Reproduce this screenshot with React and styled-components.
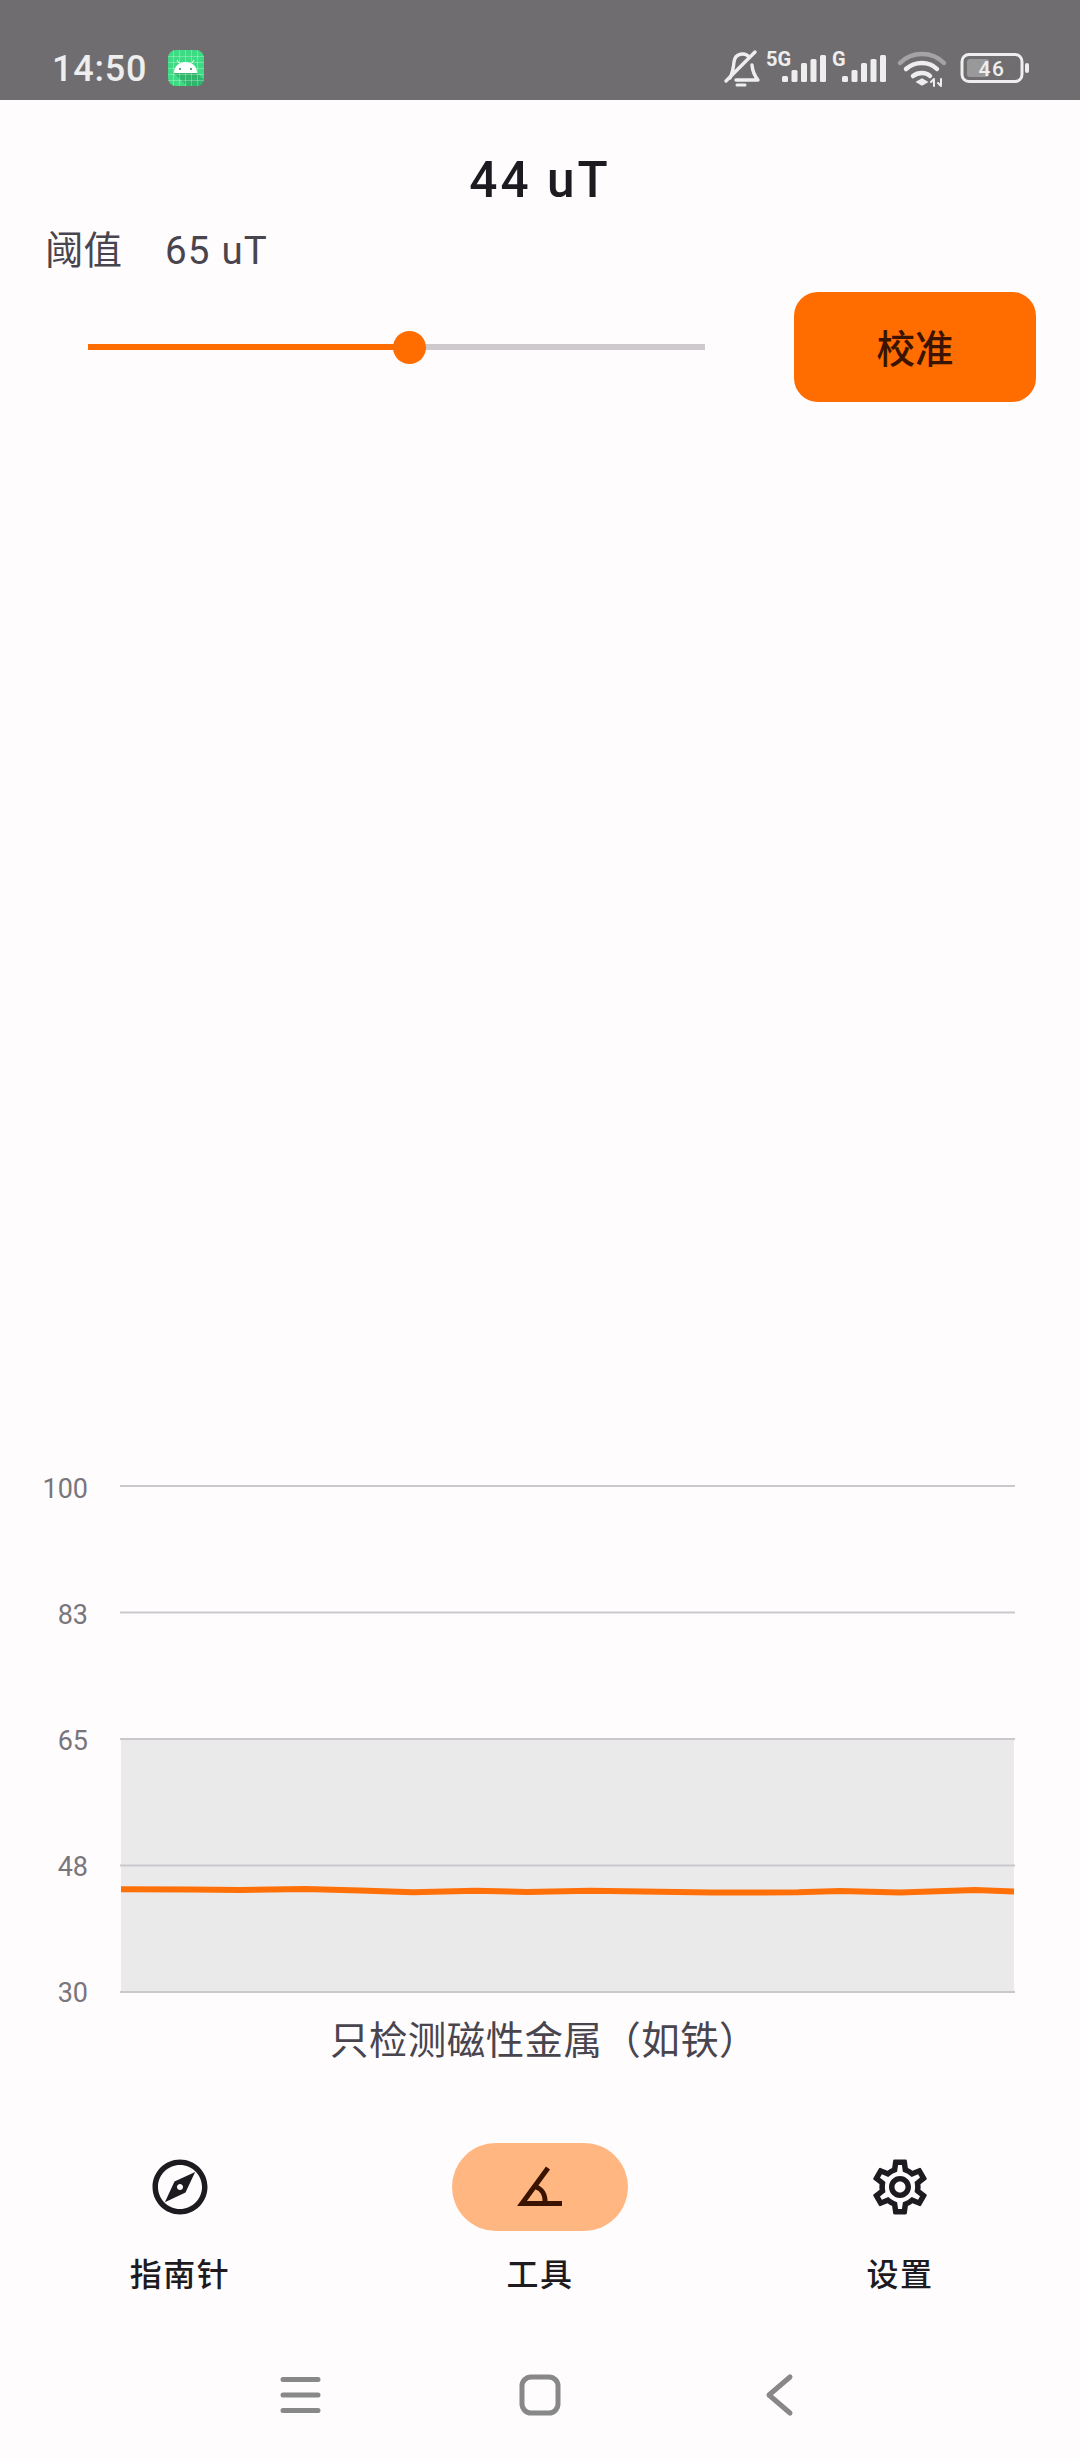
import React from 'react';
import styled, { createGlobalStyle } from 'styled-components';
import { MdOutlineExplore, MdOutlineSettings } from 'react-icons/md';

const ORANGE = '#ff6d00';
const FONT = 'Roboto, "Noto Sans CJK SC", sans-serif';

const GlobalStyle = createGlobalStyle`
    html, body {
        margin: 0;
        padding: 0;
        background: #fffcfe;
    }
`

const Page = styled.div`
    width: 1080px;
    height: 2460px;
    display: flex;
    flex-direction: column;
    background: #fffcfe;
    font-family: ${FONT};
    overflow: hidden;
`

const StatusBar = styled.div`
    height: 100px;
    box-sizing: border-box;
    flex: none;
    display: flex;
    align-items: flex-start;
    padding: 48px 49px 0 52px;
    background: #6f6d70;
`

const Clock = styled.span`
    font-size: 36px;
    font-weight: 500;
    line-height: 42px;
    letter-spacing: 0.8px;
    color: #eeeeee;
`

const AppBadge = styled.svg`
    width: 36px;
    height: 36px;
    margin: 2px 0 0 21px;
`

const StatusIcons = styled.div`
    display: flex;
    margin-left: auto;
`

const StatusIcon = styled.svg`
    height: 40px;
    width: ${p => p.$w}px;
    margin-left: ${p => p.$gap || 0}px;
    overflow: visible;
`

const Title = styled.div`
    height: 60px;
    margin-top: 50px;
    flex: none;
    text-align: center;
    font-size: 49.5px;
    font-weight: 500;
    line-height: 60px;
    letter-spacing: 3px;
    color: #1d1b20;
`

const Threshold = styled.div`
    flex: none;
    display: flex;
    gap: 43px;
    height: 50px;
    margin-top: 16px;
    padding-left: 45px;
    font-size: 38.5px;
    line-height: 50px;
    color: #49454f;
`

const ThresholdValue = styled.span`
    letter-spacing: 1.2px;
`

const SliderRow = styled.div`
    flex: none;
    display: flex;
    align-items: center;
    margin-top: 16px;
    padding: 0 44px 0 88px;
`

const Track = styled.div`
    position: relative;
    width: 617px;
    height: 6px;
    background: #cdc9cd;
`

const TrackFill = styled.div`
    height: 100%;
    background: ${ORANGE};
`

const Thumb = styled.div`
    position: absolute;
    top: -13.5px;
    width: 33px;
    height: 33px;
    margin-left: -16.5px;
    border-radius: 50%;
    background: ${ORANGE};
`

const CalibrateButton = styled.button`
    width: 242px;
    height: 110px;
    margin-left: auto;
    padding: 0 0 2px;
    border: none;
    border-radius: 24px;
    background: ${ORANGE};
    color: #3a1400;
    font-family: ${FONT};
    font-size: 38.5px;
    font-weight: 500;
`

const Spacer = styled.div`
    flex: 1;
`

const ChartRow = styled.div`
    flex: none;
    display: flex;
    align-items: center;
    height: 534px;
`

const AxisLabels = styled.div`
    width: 88px;
    height: 534px;
    display: flex;
    flex-direction: column;
    justify-content: space-between;
    align-items: flex-end;
    padding-top: 2px;
    box-sizing: border-box;
    font-size: 27px;
    line-height: 28px;
    color: #79767b;
`

const ChartSvg = styled.svg`
    width: 895px;
    height: 512px;
    margin-left: 32px;
`

const Caption = styled.div`
    flex: none;
    height: 50px;
    margin-top: 9px;
    padding-left: 8px;
    text-align: center;
    font-size: 38.5px;
    line-height: 50px;
    letter-spacing: 0.4px;
    color: #49454f;
`

const BottomNav = styled.nav`
    flex: none;
    display: grid;
    grid-template-columns: repeat(3, 360px);
    margin-top: 77px;
    height: 187px;
`

const NavItem = styled.div`
    display: flex;
    flex-direction: column;
    align-items: center;
`

const NavIcon = styled.div`
    width: 176px;
    height: 88px;
    display: flex;
    align-items: center;
    justify-content: center;
    border-radius: 44px;
    color: #1d1b20;
    background: ${p => (p.$active ? '#ffb680' : 'transparent')};
`

const NavLabel = styled.span`
    margin-top: 22px;
    font-size: 32px;
    font-weight: 500;
    line-height: 44px;
    letter-spacing: 1.5px;
    color: #1d1b20;
`

const SystemNav = styled.div`
    flex: none;
    height: 130px;
    display: flex;
    align-items: center;
    justify-content: center;
`

const SystemIcon = styled.svg`
    width: 50px;
    height: 50px;
    margin-left: ${p => p.$gap || 0}px;
    fill: none;
    stroke: #888888;
    stroke-width: 5;
    stroke-linecap: round;
    stroke-linejoin: round;
`

const levels = [100, 83, 65, 48, 30];
const gridY = [2, 128.5, 255, 381.5, 508];

// magnetic field readings in svg px
const readings = [
    [1, 405.3], [70, 405.5], [120, 406], [185, 404.9], [240, 406.5], [293, 408.3], [355, 406.8],
    [407, 408], [470, 406.8], [592, 408.6], [678, 408.3], [720, 407.1], [780, 408.6],
    [855, 406.1], [894, 407.6],
];

const navItems = [
    { label: '指南针', icon: <MdOutlineExplore size={66} /> },
    { label: '工具', active: true, icon: <AngleIcon /> },
    { label: '设置', icon: <MdOutlineSettings size={66} /> },
];

function AngleIcon() {
    return (
        <svg width="66" height="66" viewBox="0 0 66 66" fill="none" stroke="#3a1400" strokeWidth="5">
            <path d="M41 14 L15 49.5 H55" />
            <path d="M29 33 C35 35 38.5 41 38 49" />
        </svg>
    );
}

const AndroidBadge = () => (
    <AppBadge viewBox="0 0 36 36">
        <rect width="36" height="36" rx="8" fill="#3ddc84" />
        <path d="M6 23 H29 L36 30 V28 C36 33 33 36 28 36 H19 Z" fill="#2fb56c" />
        <path
            d="M0 6.5H36M0 12.5H36M0 18.5H36M0 24.5H36M0 30.5H36M5.5 0V36M11.5 0V36M17.5 0V36M23.5 0V36M29.5 0V36"
            stroke="#ffffff"
            strokeOpacity="0.35"
            strokeWidth="0.8"
        />
        <path d="M6 23 C6 16 11 12 17.5 12 C24 12 29 16 29 23 Z" fill="#ffffff" />
        <path d="M11 13 L9 10 M24 13 L26 10" stroke="#ffffff" strokeWidth="1" />
        <circle cx="12" cy="19" r="1" fill="#1f8a52" />
        <circle cx="23" cy="19" r="1" fill="#1f8a52" />
    </AppBadge>
);

const BellOffIcon = () => (
    <StatusIcon $w={36} viewBox="0 0 36 40" fill="none" stroke="#eeeeee" strokeWidth="3.4" strokeLinecap="round" strokeLinejoin="round">
        <path d="M2 33 L31 4" />
        <path d="M25 9 C21 4 11 5 10 14 C9.5 19 9 24 6 30" />
        <path d="M28 17 C28.5 23 30 27 34 32 H12" />
        <path d="M13 37 H21" strokeWidth="3" />
    </StatusIcon>
);

const barHeights = [6, 12, 19, 23, 27];

const SignalIcon = ({ label, w, barsX, gap }) => (
    <StatusIcon $w={w} $gap={gap} viewBox={`0 0 ${w} 40`}>
        <text x="0" y="18" fontFamily="Roboto, sans-serif" fontSize="20" fontWeight="700" fill="#eeeeee">{label}</text>
        {barHeights.map((h, i) => (
            <rect key={i} x={barsX + i * 9.5} y={34 - h} width="6" height={h} rx="1.5" fill="#eeeeee" />
        ))}
    </StatusIcon>
);

const WifiIcon = () => (
    <StatusIcon $w={48} $gap={11} viewBox="0 0 48 40" fill="none" strokeLinecap="round">
        <path d="M2 15 C14 3 34 3 46 15" stroke="#a5a3a5" strokeWidth="4.5" />
        <path d="M8 21 C17 13 31 13 39 21" stroke="#eeeeee" strokeWidth="4.5" />
        <path d="M15 28 C20 24 28 24 32 28" stroke="#eeeeee" strokeWidth="4.5" />
        <path d="M19 34 L24 31 L29 34 L24 37 Z" fill="#eeeeee" stroke="#eeeeee" strokeWidth="1.5" />
        <path d="M36 38 V32 M33 34 L36 31 M43 31 V37 M40 35 L43 38" stroke="#eeeeee" strokeWidth="2" />
    </StatusIcon>
);

const BatteryIcon = () => (
    <StatusIcon $w={71} $gap={14} viewBox="0 0 71 40">
        <rect x="2" y="6.5" width="60" height="27" rx="7" fill="none" stroke="#eeeeee" strokeWidth="3" />
        <rect x="7" y="11" width="22" height="18" rx="3" fill="#9a999a" />
        <rect x="65" y="15" width="4" height="10" rx="2" fill="#eeeeee" />
        <text x="32" y="27.5" textAnchor="middle" fontFamily="Roboto, sans-serif" fontSize="21" fontWeight="500" letterSpacing="1.5" fill="#eeeeee">46</text>
    </StatusIcon>
);

const App = () => {
    const curve = readings.map(([x, y]) => `${x},${y}`).join(' ');
    return (
        <Page>
            <GlobalStyle />
            <StatusBar>
                <Clock>14:50</Clock>
                <AndroidBadge />
                <StatusIcons>
                    <BellOffIcon />
                    <SignalIcon label="5G" w={62} barsX={16} gap={6} />
                    <SignalIcon label="G" w={55} barsX={10} gap={4} />
                    <WifiIcon />
                    <BatteryIcon />
                </StatusIcons>
            </StatusBar>

            <Title>44 uT</Title>
            <Threshold>
                <span>阈值</span>
                <ThresholdValue>65 uT</ThresholdValue>
            </Threshold>
            <SliderRow>
                <Track>
                    <TrackFill style={{ width: '52.1%' }} />
                    <Thumb style={{ left: '52.1%' }} />
                </Track>
                <CalibrateButton>校准</CalibrateButton>
            </SliderRow>

            <Spacer />

            <ChartRow>
                <AxisLabels>
                    {levels.map(v => <span key={v}>{v}</span>)}
                </AxisLabels>
                <ChartSvg viewBox="0 0 895 512">
                    <rect x="1" y="255" width="893" height="253" fill="#ebeaea" />
                    {gridY.map(y => (
                        <line key={y} x1="0" x2="895" y1={y} y2={y} stroke="#cac8cc" strokeWidth="2" />
                    ))}
                    <polyline points={curve} fill="none" stroke="#ff7008" strokeWidth="6" strokeLinejoin="round" />
                </ChartSvg>
            </ChartRow>
            <Caption>只检测磁性金属（如铁）</Caption>

            <BottomNav>
                {navItems.map(item => (
                    <NavItem key={item.label}>
                        <NavIcon $active={item.active}>{item.icon}</NavIcon>
                        <NavLabel>{item.label}</NavLabel>
                    </NavItem>
                ))}
            </BottomNav>

            <SystemNav>
                <SystemIcon viewBox="0 0 50 50">
                    <path d="M7 9.5 H42 M7 25 H42 M7 40.5 H42" />
                </SystemIcon>
                <SystemIcon viewBox="0 0 50 50" $gap={189}>
                    <rect x="7" y="7" width="36" height="36" rx="9" />
                </SystemIcon>
                <SystemIcon viewBox="0 0 50 50" $gap={189}>
                    <path d="M36 7 L15 25 L36 43" />
                </SystemIcon>
            </SystemNav>
        </Page>
    );
};

export default App;
